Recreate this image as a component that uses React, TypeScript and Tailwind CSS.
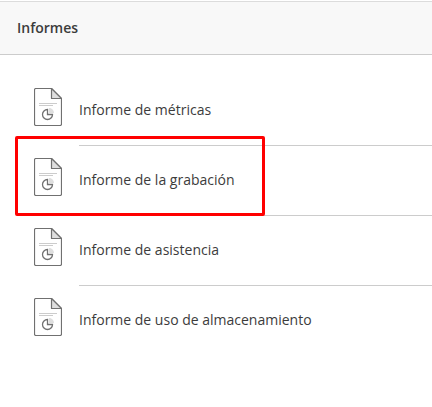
const reports = [
  { id: 'metricas', label: 'Informe de métricas' },
  { id: 'grabacion', label: 'Informe de la grabación', highlighted: true },
  { id: 'asistencia', label: 'Informe de asistencia' },
  { id: 'almacenamiento', label: 'Informe de uso de almacenamiento' },
];

const ReportIcon = () => (
  <svg className="mt-3 h-[38px] w-7 shrink-0" viewBox="0 0 28 38" fill="none" aria-hidden="true">
    <path d="M17.5 0.5H2Q0.5 0.5 0.5 2V36Q0.5 37.5 2 37.5H26Q27.5 37.5 27.5 36V10.5Z" fill="#fff" stroke="#707070" strokeWidth={1.2} />
    <path d="M17.5 0.5V10.5H27.5Z" fill="#dedede" stroke="#707070" strokeWidth={1.2} strokeLinejoin="round" />
    <path d="M5 15.5H23M5 17.5H19" stroke="#cccccc" />
    {/* Pie chart */}
    <path d="M15 20A5 5 0 0 1 20 25H15Z" fill="#dedede" />
    <path d="M13.5 21.5A5 5 0 1 0 18.5 26.5H13.5Z" stroke="#707070" strokeWidth={1.3} />
  </svg>
);

const App = () => {
  return (
    <main className="min-h-screen bg-white pt-px font-['Open_Sans',sans-serif] text-sm text-[#3c3c3c]">
      <header className="border-t border-b border-t-[#dcdcdc] border-b-[#cccccc] bg-[#f8f8f8] px-[17px] py-4">
        <h1 className="text-sm font-semibold">Informes</h1>
      </header>
      <ul className="pt-[21px]">
        {reports.map((report) => (
          <li key={report.id} className="group relative">
            <a href={`#${report.id}`} className="flex gap-[17px] pl-[34px]">
              <ReportIcon />
              <span className="flex h-[70px] grow items-center border-b border-[#cccccc] pb-0.5 group-last:border-transparent">
                {report.label}
              </span>
            </a>
            {report.highlighted && (
              <div className="pointer-events-none absolute -top-[10px] left-[15px] z-10 h-20 w-[250px] rounded-xs border-3 border-[#ff0000]" />
            )}
          </li>
        ))}
      </ul>
    </main>
  );
};

export default App;
